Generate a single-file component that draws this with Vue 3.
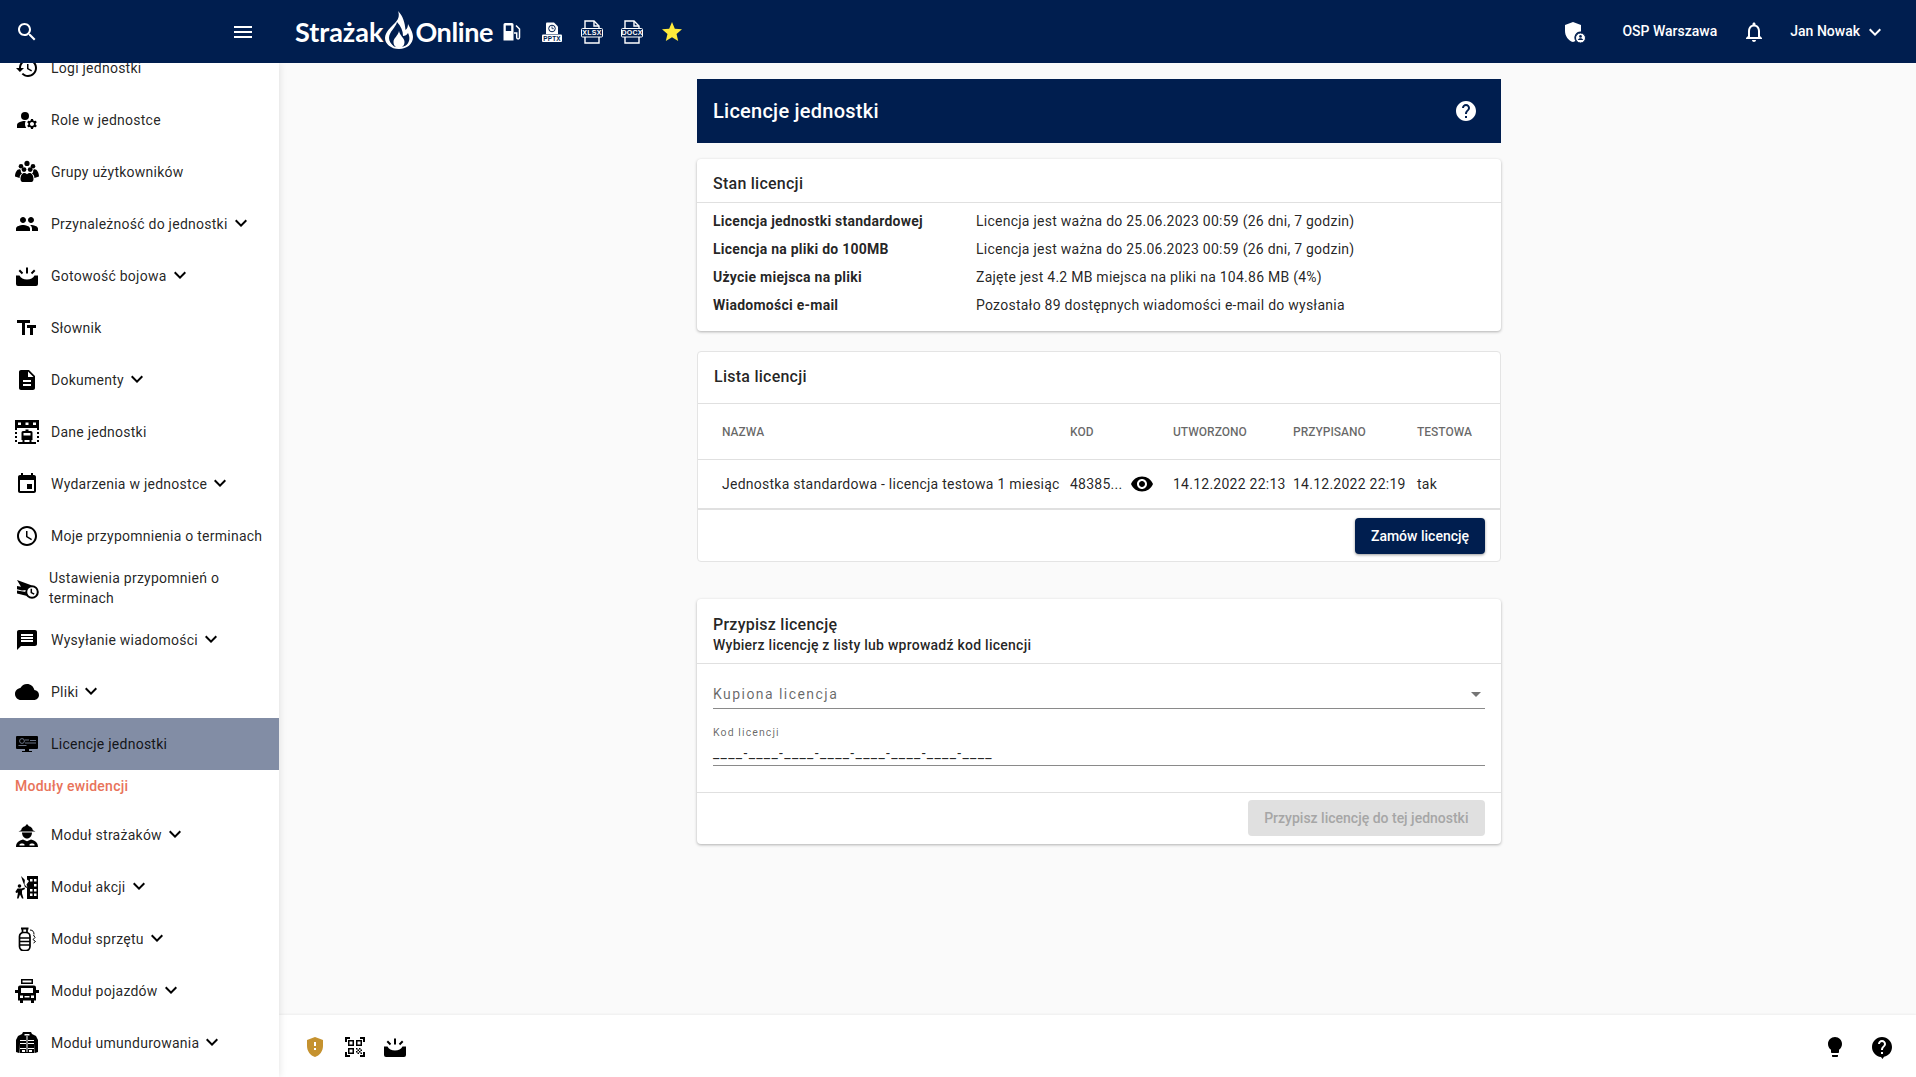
<script setup>
const p = (d, extra = '') => `<path d="${d}" ${extra}/>`;
const fileIcon = (label) => `
  <path d="M6 1h8l5 5v17H5V1z" fill="none" stroke="#fff" stroke-width="1.4"/>
  <path d="M14 1v5h5" fill="none" stroke="#fff" stroke-width="1.4"/>
  <rect x="1.5" y="8.5" width="21" height="8.5" rx="1" fill="#001e4f" stroke="#fff" stroke-width="1"/>
  <text x="12" y="15.300" text-anchor="middle" font-size="7" font-weight="700" font-family="Liberation Sans" fill="#fff">${label}</text>`;

// material paths + a few drawn by hand for the fire brigade stuff
const icons = {
  search: p('M15.5 14h-.79l-.28-.27C15.41 12.59 16 11.11 16 9.5 16 5.91 13.09 3 9.5 3S3 5.91 3 9.5 5.91 16 9.5 16c1.61 0 3.09-.59 4.23-1.57l.27.28v.79l5 4.99L20.49 19l-4.99-5zm-6 0C7.01 14 5 11.99 5 9.5S7.01 5 9.5 5 14 7.01 14 9.5 11.99 14 9.5 14z'),
  menu: p('M3 18h18v-2H3v2zm0-5h18v-2H3v2zm0-7v2h18V6H3z'),
  chevron: p('M16.59 8.59L12 13.17 7.41 8.59 6 10l6 6 6-6z'),
  bell: p('M12 22c1.1 0 2-.9 2-2h-4c0 1.1.9 2 2 2zm6-6v-5c0-3.07-1.63-5.64-4.5-6.32V4c0-.83-.67-1.5-1.5-1.5s-1.5.67-1.5 1.5v.68C7.64 5.36 6 7.92 6 11v5l-2 2v1h16v-1l-2-2zm-2 1H8v-6c0-2.48 1.51-4.5 4-4.5s4 2.02 4 4.5v6z'),
  star: p('M12 17.27L18.18 21l-1.64-7.03L22 9.24l-7.19-.61L12 2 9.19 8.63 2 9.24l5.46 4.73L5.82 21z'),
  help: p('M12 2C6.48 2 2 6.48 2 12s4.48 10 10 10 10-4.48 10-10S17.52 2 12 2zm1 17h-2v-2h2v2zm2.07-7.75l-.9.92C13.45 12.9 13 13.5 13 15h-2v-.5c0-1.1.45-2.1 1.17-2.83l1.24-1.26c.37-.36.59-.86.59-1.41 0-1.1-.9-2-2-2s-2 .9-2 2H8c0-2.21 1.79-4 4-4s4 1.79 4 4c0 .88-.36 1.68-.93 2.25z'),
  helpChat: p('M12 2C6.48 2 2 6.48 2 12c0 5.2 4 9.5 9 10l1.5 2 1.5-2.2c4.6-.8 8-5 8-9.8 0-5.52-4.48-10-10-10zm1 17h-2v-2h2v2zm2.07-7.75l-.9.92C13.45 12.9 13 13.5 13 15h-2v-.5c0-1.1.45-2.1 1.17-2.83l1.24-1.26c.37-.36.59-.86.59-1.41 0-1.1-.9-2-2-2s-2 .9-2 2H8c0-2.21 1.79-4 4-4s4 1.79 4 4c0 .88-.36 1.68-.93 2.25z'),
  eye: p('M12 4.5C7 4.5 2.73 7.61 1 12c1.73 4.39 6 7.5 11 7.5s9.27-3.11 11-7.5c-1.73-4.39-6-7.5-11-7.5zM12 17c-2.76 0-5-2.24-5-5s2.24-5 5-5 5 2.24 5 5-2.24 5-5 5zm0-8c-1.66 0-3 1.34-3 3s1.34 3 3 3 3-1.34 3-3-1.34-3-3-3z'),
  bulb: p('M9 21c0 .55.45 1 1 1h4c.55 0 1-.45 1-1v-1H9v1zm3-19C8.14 2 5 5.14 5 9c0 2.38 1.19 4.47 3 5.74V17c0 .55.45 1 1 1h6c.55 0 1-.45 1-1v-2.26c1.81-1.27 3-3.36 3-5.74 0-3.86-3.14-7-7-7z'),
  shieldWarn: p('M12 2L4 5v6.09c0 5.05 3.41 9.76 8 10.91 4.59-1.15 8-5.86 8-10.91V5l-8-3zm1 13h-2v-2h2v2zm0-4h-2V7h2v4z', 'fill="#c5922f"'),
  qr: p('M9.5 6.5v3h-3v-3h3M11 5H5v6h6V5zm-1.5 9.5v3h-3v-3h3M11 13H5v6h6v-6zm6.5-6.5v3h-3v-3h3M19 5h-6v6h6V5zm-6 8h1.5v1.5H13V13zm1.5 1.5H16V16h-1.5v-1.5zM16 13h1.5v1.5H16V13zm-3 3h1.5v1.5H13V16zm1.5 1.5H16V19h-1.5v-1.5zM16 16h1.5v1.5H16V16zm1.5-1.5H19V16h-1.5v-1.5zm0 3H19V19h-1.5v-1.5zM22 7h-2V4h-3V2h5v5zm0 15v-5h-2v3h-3v2h5zM2 22h5v-2H4v-3H2v5zM2 2v5h2V4h3V2H2z'),
  tray: p('M1 11.5h3.5c1.3 2.6 4 4 7.5 4s6.2-1.4 7.5-4H23V20a2 2 0 0 1-2 2H3a2 2 0 0 1-2-2z') + p('M11 3.5h2v6h-2zM3.6 7l1.4-1.4 3.2 3.2-1.4 1.4zM19 5.6L20.4 7l-3.2 3.2-1.4-1.4z'),
  shieldUser: p('M11 2L3 5v6c0 5.05 3.4 9.76 8 11 .9-.2 1.7-.6 2.5-1A6 6 0 0 1 19 11.6V5z') + '<circle cx="18.5" cy="18" r="5" stroke="#001e4f" stroke-width="1"/><circle cx="18.5" cy="16.4" r="1.3" fill="#001e4f"/><path d="M15.8 20c.5-1.2 1.5-1.7 2.7-1.7s2.2.5 2.7 1.7z" fill="#001e4f"/>',
  pump: p('M3.500 4.500A1.500 1.500 0 0 1 5 3h7a1.500 1.500 0 0 1 1.500 1.500V20.500h-10zM5.800 5.500v5.500h5.400V5.500z', 'fill-rule="evenodd"') + '<path d="M16 5.500l3.500 3.500v8.500a1.400 1.400 0 0 1-2.800 0V13H14" fill="none" stroke="#fff" stroke-width="1.500"/>',
  ppt: p('M7 2.500h7l4 4V14H6V3.500a1 1 0 0 1 1-1z') + '<circle cx="12" cy="8.500" r="3.300" fill="none" stroke="#001e4f" stroke-width="1"/><path d="M12 6.500v2.200h1.800" fill="none" stroke="#001e4f" stroke-width=".8"/><rect x="2" y="14.500" width="20" height="7.500" rx="1"/><text x="12" y="20.800" text-anchor="middle" font-size="6.400" font-weight="700" font-family="Liberation Sans" fill="#001e4f">PPTX</text>',
  xlsx: fileIcon('XLSX'),
  docx: fileIcon('DOCX'),
  history: p('M13 3c-4.97 0-9 4.03-9 9H1l3.89 3.89.07.14L9 12H6c0-3.87 3.13-7 7-7s7 3.13 7 7-3.13 7-7 7c-1.93 0-3.68-.79-4.94-2.06l-1.42 1.42C8.27 19.99 10.51 21 13 21c4.97 0 9-4.03 9-9s-4.03-9-9-9zm-1 5v5l4.28 2.54.72-1.21-3.5-2.08V8H12z'),
  roles: '<circle cx="10" cy="8" r="4"/>' + p('M10.67 13.02C10.45 13.01 10.23 13 10 13c-2.42 0-4.68.67-6.61 1.82-.88.52-1.39 1.5-1.39 2.53V20h9.26c-.79-1.13-1.26-2.51-1.26-4 0-1.07.25-2.07.67-2.98z') + p('M20.75 16c0-.22-.03-.42-.06-.63l1.14-1.01-1-1.73-1.45.49c-.32-.27-.68-.48-1.08-.63L18 11h-2l-.3 1.49c-.4.15-.76.36-1.08.63l-1.45-.49-1 1.73 1.14 1.01c-.03.21-.06.41-.06.63s.03.42.06.63l-1.14 1.01 1 1.73 1.45-.49c.32.27.68.48 1.08.63L16 21h2l.3-1.49c.4-.15.76-.36 1.08-.63l1.45.49 1-1.73-1.14-1.01c.03-.21.06-.41.06-.63zM17 18c-1.1 0-2-.9-2-2s.9-2 2-2 2 .9 2 2-.9 2-2 2z'),
  groups: '<circle cx="12" cy="3.4" r="2.6"/><circle cx="6" cy="6.2" r="2.3"/><circle cx="18" cy="6.2" r="2.3"/><circle cx="9" cy="9.6" r="2.4"/><circle cx="15.2" cy="9.6" r="2.4"/>' + p('M0 16.5c0-4 2-7.3 4.4-7.3.9 0 1.4.7 1.4 1.6 0 2 .8 2.4 1.4 2.8-1.8 1-2.6 2.5-2.6 4.4zM24 16.5c0-4-2-7.3-4.4-7.3-.9 0-1.4.7-1.4 1.6 0 2-.8 2.4-1.4 2.8 1.8 1 2.6 2.5 2.6 4.4z') + p('M5.5 19c0-3.4 1.8-6 3.8-6 1 0 1.9.5 2.7 1.2.8-.7 1.7-1.2 2.7-1.2 2 0 3.8 2.6 3.8 6 0 2-1 3-2 3h-9c-1 0-2-1-2-3z'),
  people: p('M16 11c1.66 0 2.99-1.34 2.99-3S17.66 5 16 5c-1.66 0-3 1.34-3 3s1.34 3 3 3zm-8 0c1.66 0 2.99-1.34 2.99-3S9.66 5 8 5C6.34 5 5 6.34 5 8s1.34 3 3 3zm0 2c-2.33 0-7 1.17-7 3.5V19h14v-2.5c0-2.33-4.67-3.5-7-3.5zm8 0c-.29 0-.62.02-.97.05 1.16.84 1.97 1.97 1.97 3.45V19h6v-2.5c0-2.33-4.67-3.5-7-3.5z'),
  dict: p('M2 4v3h5v12h3V7h5V4H2zm19 5h-9v3h3v7h3v-7h3V9z'),
  doc: p('M14 2H6c-1.1 0-1.99.9-1.99 2L4 20c0 1.1.89 2 1.99 2H18c1.1 0 2-.9 2-2V8l-6-6zm2 16H8v-2h8v2zm0-4H8v-2h8v2zm-3-5V3.5L18.5 9H13z'),
  station: p('M0 0h24v8H0zM3 2.6v2.4h3V2.6zM10.5 2.6v2.4h3V2.6zM18 2.6v2.4h3V2.6z', 'fill-rule="evenodd"') + p('M0 8h2v2H0zM0 12h2v2H0zM0 16h2v2H0zM0 20h2v2H0zM22 8h2v2h-2zM22 12h2v2h-2zM22 16h2v2h-2zM22 20h2v2h-2zM3 22h18v2H3z') + p('M10.5 9.5h3v1.5h2.5a1.5 1.5 0 0 1 1.5 1.5V20h-1v2h-2v-2h-5v2h-2v-2h-1v-7.5A1.5 1.5 0 0 1 8 11h2.5zM8.5 13v2.5h7V13z', 'fill-rule="evenodd"'),
  event: p('M17 12h-5v5h5v-5zM16 1v2H8V1H6v2H5c-1.11 0-1.99.9-1.99 2L3 19c0 1.1.89 2 2 2h14c1.1 0 2-.9 2-2V5c0-1.1-.9-2-2-2h-1V1h-2zm3 18H5V8h14v11z'),
  clock: p('M11.99 2C6.47 2 2 6.48 2 12s4.47 10 9.99 10C17.52 22 22 17.52 22 12S17.52 2 11.99 2zM12 20c-4.42 0-8-3.58-8-8s3.58-8 8-8 8 3.58 8 8-3.58 8-8 8zm.5-13H11v6l5.25 3.15.75-1.23-4.5-2.67z'),
  reminder: p('M2 4l15 5.6c-3 .8-5 2.5-5.8 4.4L7 14.6 2 13.2V10l4 .8zM2 14.5l8.8 1.4c0 1.6.5 3 1.3 4.1L2 17.5z') + '<circle cx="17" cy="16" r="5.8" fill="none" stroke="#000" stroke-width="2"/><path d="M16.3 12.8v3.8l2.9 1.6" fill="none" stroke="#000" stroke-width="1.5"/>',
  message: p('M20 2H4c-1.1 0-1.99.9-1.99 2L2 22l4-4h14c1.1 0 2-.9 2-2V4c0-1.1-.9-2-2-2zm-2 12H6v-2h12v2zm0-3H6V9h12v2zm0-3H6V6h12v2z'),
  cloud: p('M19.35 10.04C18.67 6.59 15.64 4 12 4 9.11 4 6.6 5.64 5.35 8.04 2.34 8.36 0 10.91 0 14c0 3.31 2.69 6 6 6h13c2.76 0 5-2.24 5-5 0-2.64-2.05-4.78-4.65-4.96z'),
  license: p('M2 4h20a1 1 0 0 1 1 1v11a1 1 0 0 1-1 1H2a1 1 0 0 1-1-1V5a1 1 0 0 1 1-1z') + p('M10 17h4v2h3v1H7v-1h3z') + '<circle cx="7" cy="9" r="2.4" fill="none" stroke="#828da5" stroke-width=".8"/><path d="M10 8h4M10 11h11M3.5 13.5h8M15 8.5h6" stroke="#828da5" stroke-width=".8"/>',
  firefighter: p('M12 1l2 2.2c2.2.4 3.6 2 3.8 4l2.7 1.3H3.5l2.7-1.3c.2-2 1.6-3.6 3.8-4z') + p('M7 9.5h10c0 3.4-2.2 6-5 6s-5-2.6-5-6z') + p('M1 24c0-4.2 2.8-6.4 7-7.4l4 1.6 4-1.6c4.2 1 7 3.2 7 7.4zM4.5 21.5v1h5v-1c-1-1.2-4-1.2-5 0zM14.5 21.5v1h5v-1c-1-1.2-4-1.2-5 0z', 'fill-rule="evenodd"'),
  action: p('M12 1h11v23H12zM15 4v2.5h2.5V4zM19 4v2.5h2.5V4zM19 9v2.5h2.5V9zM15 14v2.5h2.5V14zM19 14v2.5h2.5V14zM15 18.500v2.500h2.500v-2.500zM19 18.500v2.500h2.500v-2.500z', 'fill-rule="evenodd"') + p('M6 1l4 4 5 1-2 4 1 4-4-2-2-5z') + p('M10 3l4 3-2.500 3.500 1 3-3-3z', 'fill="#fff"') + '<circle cx="4.500" cy="11" r="1.800"/>' + p('M2.500 13.500h4l3-1 .5 1.500-3 1.500v3l1.500 5H7l-2-4-1.500 4H2l1-6-2 .5-.5-1.500z'),
  tank: '<g transform="translate(1.500 0)"><g fill="none" stroke="#000" stroke-width="1.700"><rect x="3" y="5.500" width="10.500" height="18" rx="4"/><path d="M3 11h10.500M3 14.500h10.500M3 18h10.500"/><path d="M6 5.500V2M10.500 5.500V2"/></g>' + p('M13.500 3c3 0 4 2 4 4.500M17 8l1.500 2.500-2 2 2.500 2-2 1.500', 'stroke="#000" stroke-width="1" fill="none"') + p('M4.500 .5h7.500V2.500H4.500z') + '</g>',
  truck: p('M6 0h12v1.500H6zM6 3.500h12V5H6zM6 0h1.500v5H6zM16.500 0H18v5h-1.500z') + p('M5 6.500h14a2 2 0 0 1 2 2V11h3v3h-3v7.500h-2V24h-3v-2.500H8V24H5v-2.500H3V14H0v-3h3V8.500a2 2 0 0 1 2-2zM6 9v5h12V9zM5 16.500V19h3v-2.500zM16 16.500V19h3v-2.500zM9.500 17v1.500h5V17z', 'fill-rule="evenodd"'),
  uniform: p('M8 1h8l1 2 4 2 2 4v12l-3 1V12.500l-.5 9.500h-15L4 12.500V22l-3-1V9l2-4 4-2zM9.500 3v1.500h5V3zM5 9v1h14V9zM5 12v1h14v-1zM5 17v1h14v-1zM11.500 5v16h1V5zM7 19v2h3v-2zM14 19v2h3v-2z', 'fill-rule="evenodd"')
};

const menuTop = [
  { label: 'Logi jednostki', icon: 'history' },
  { label: 'Role w jednostce', icon: 'roles' },
  { label: 'Grupy użytkowników', icon: 'groups' },
  { label: 'Przynależność do jednostki', icon: 'people', more: true },
  { label: 'Gotowość bojowa', icon: 'tray', more: true },
  { label: 'Słownik', icon: 'dict' },
  { label: 'Dokumenty', icon: 'doc', more: true },
  { label: 'Dane jednostki', icon: 'station' },
  { label: 'Wydarzenia w jednostce', icon: 'event', more: true },
  { label: 'Moje przypomnienia o terminach', icon: 'clock' },
  { label: 'Ustawienia przypomnień o terminach', icon: 'reminder', wrap: true },
  { label: 'Wysyłanie wiadomości', icon: 'message', more: true },
  { label: 'Pliki', icon: 'cloud', more: true },
  { label: 'Licencje jednostki', icon: 'license', active: true }
];

const menuModules = [
  { label: 'Moduł strażaków', icon: 'firefighter', more: true },
  { label: 'Moduł akcji', icon: 'action', more: true },
  { label: 'Moduł sprzętu', icon: 'tank', more: true },
  { label: 'Moduł pojazdów', icon: 'truck', more: true },
  { label: 'Moduł umundurowania', icon: 'uniform', more: true }
];

const licenseState = [
  { name: 'Licencja jednostki standardowej', value: 'Licencja jest ważna do 25.06.2023 00:59 (26 dni, 7 godzin)' },
  { name: 'Licencja na pliki do 100MB', value: 'Licencja jest ważna do 25.06.2023 00:59 (26 dni, 7 godzin)' },
  { name: 'Użycie miejsca na pliki', value: 'Zajęte jest 4.2 MB miejsca na pliki na 104.86 MB (4%)' },
  { name: 'Wiadomości e-mail', value: 'Pozostało 89 dostępnych wiadomości e-mail do wysłania' }
];

const topFiles = ['pump', 'ppt', 'xlsx', 'docx'];
</script>

<template>
  <div class="app">
    <header class="topbar">
      <div class="top-left">
        <svg class="ic white" viewBox="0 0 24 24" v-html="icons.search"></svg>
        <svg class="ic white" viewBox="0 0 24 24" v-html="icons.menu"></svg>
      </div>
      <div class="logo">
        <span>Strażak</span>
        <svg class="flame" viewBox="0 0 32 38">
          <path fill="#fff" fill-rule="evenodd" d="M15 0C17 5 15 9 12 12C8 16 2 21 2 27C2 33 8 38 16 38C24 38 30 33 30 26C30 21 27 17 25 13C25 16 24 18 22.500 19C22 12 20 5 15 0ZM14 11C13 16 6 21 6 27C6 30 8 33 11 35.500C15 36.500 21 36.500 24 33.500C27 30 27 26 25 22C24 24 22 25 20 25C20 20 18 15 14 11Z" />
          <path fill="#fff" d="M16 20C17 25 21.500 27 21.500 31C21.500 34.500 19 37 16 37C13 37 10.500 34.500 10.500 31C10.500 27 15 25 16 20Z" />
        </svg>
        <span class="logo-end">Online</span>
      </div>
      <div class="top-files">
        <svg v-for="f in topFiles" :key="f" class="ic white" viewBox="0 0 24 24" v-html="icons[f]"></svg>
        <svg class="ic star" viewBox="0 0 24 24" v-html="icons.star"></svg>
      </div>
      <div class="top-right">
        <svg class="ic white" viewBox="0 0 24 24" v-html="icons.shieldUser"></svg>
        <span class="unit">OSP Warszawa</span>
        <svg class="ic white" viewBox="0 0 24 24" v-html="icons.bell"></svg>
        <div class="user">
          <span>Jan Nowak</span>
          <svg class="ic white" viewBox="0 0 24 24" v-html="icons.chevron"></svg>
        </div>
      </div>
    </header>

    <div class="body">
      <aside class="sidebar">
        <ul class="menu">
          <li v-for="item in menuTop" :key="item.label" class="menu-item" :class="{ active: item.active }">
            <svg class="ic" viewBox="0 0 24 24" v-html="icons[item.icon]"></svg>
            <span class="menu-label" :class="{ wrap: item.wrap }">{{ item.label }}</span>
            <svg v-if="item.more" class="ic more" viewBox="0 0 24 24" v-html="icons.chevron"></svg>
          </li>
          <li class="menu-section">Moduły ewidencji</li>
          <li v-for="item in menuModules" :key="item.label" class="menu-item">
            <svg class="ic" viewBox="0 0 24 24" v-html="icons[item.icon]"></svg>
            <span class="menu-label">{{ item.label }}</span>
            <svg class="ic more" viewBox="0 0 24 24" v-html="icons.chevron"></svg>
          </li>
        </ul>
      </aside>

      <main class="main">
        <div class="content">
          <div class="page-head">
            <h1>Licencje jednostki</h1>
            <svg class="ic white" viewBox="0 0 24 24" v-html="icons.help"></svg>
          </div>

          <section class="card state-card">
            <h2 class="card-title">Stan licencji</h2>
            <dl class="state-list">
              <div v-for="row in licenseState" :key="row.name" class="state-row">
                <dt>{{ row.name }}</dt>
                <dd>{{ row.value }}</dd>
              </div>
            </dl>
          </section>

          <section class="card list-card">
            <h2 class="card-title">Lista licencji</h2>
            <div class="tr thead">
              <span>Nazwa</span>
              <span>Kod</span>
              <span>Utworzono</span>
              <span>Przypisano</span>
              <span>Testowa</span>
            </div>
            <div class="tr tbody">
              <span>Jednostka standardowa - licencja testowa 1 miesiąc</span>
              <span class="code">48385...<svg class="eye" viewBox="0 0 24 24" v-html="icons.eye"></svg></span>
              <span>14.12.2022 22:13</span>
              <span>14.12.2022 22:19</span>
              <span>tak</span>
            </div>
            <div class="list-actions">
              <button class="btn">Zamów licencję</button>
            </div>
          </section>

          <section class="card assign-card">
            <div class="assign-head">
              <h2>Przypisz licencję</h2>
              <p>Wybierz licencję z listy lub wprowadź kod licencji</p>
            </div>
            <div class="assign-form">
              <div class="field select">
                <span>Kupiona licencja</span>
                <i class="arrow"></i>
              </div>
              <div class="field text">
                <label>Kod licencji</label>
                <span>____-____-____-____-____-____-____-____</span>
              </div>
            </div>
            <div class="assign-actions">
              <button class="btn disabled">Przypisz licencję do tej jednostki</button>
            </div>
          </section>
        </div>

        <footer class="footer">
          <div class="foot-group">
            <svg class="ic" viewBox="0 0 24 24" v-html="icons.shieldWarn"></svg>
            <svg class="ic" viewBox="0 0 24 24" v-html="icons.qr"></svg>
            <svg class="ic" viewBox="0 0 24 24" v-html="icons.tray"></svg>
          </div>
          <div class="foot-group right">
            <svg class="ic" viewBox="0 0 24 24" v-html="icons.bulb"></svg>
            <svg class="ic" viewBox="0 0 24 24" v-html="icons.helpChat"></svg>
          </div>
        </footer>
      </main>
    </div>
  </div>
</template>

<style>
html, body {
  margin: 0;
  overflow: hidden;
}
</style>

<style scoped>
.app {
  display: flex;
  flex-direction: column;
  height: 1077px;
  font-family: Roboto, "Liberation Sans", sans-serif;
  font-size: 14px;
  letter-spacing: 0.25px;
  color: rgba(0, 0, 0, 0.87);
  background: #fafafa;
}

.ic {
  width: 24px;
  height: 24px;
  flex: none;
  fill: #000;
}
.ic.white { fill: #fff; }
.ic.star { fill: #ffeb3b; }

.topbar {
  display: flex;
  align-items: center;
  height: 63px;
  flex: none;
  background: #001e4f;
  color: #fff;
  position: relative;
  z-index: 2;
}
.top-left {
  display: flex;
  justify-content: space-between;
  width: 279px;
  padding: 0 24px 0 15px;
  box-sizing: border-box;
}
.logo {
  display: flex;
  align-items: center;
  width: 205px;
  margin-left: 16px;
  font-family: Lato, sans-serif;
  font-weight: 700;
  font-size: 27px;
  letter-spacing: 0;
}
.logo-end { letter-spacing: -0.4px; }
.flame {
  width: 32px;
  height: 38px;
  flex: none;
  margin-top: -4px;
}
.top-files {
  display: flex;
  gap: 16px;
}
.top-right {
  display: flex;
  align-items: center;
  margin-left: auto;
  padding-right: 29px;
  font-weight: 500;
  letter-spacing: 0;
}
.top-right span { margin-bottom: 2px; }
.unit { margin: 0 25px 2px 36px; }
.user {
  display: flex;
  align-items: center;
  gap: 3px;
  margin-left: 24px;
}

.body {
  display: flex;
  flex: 1;
  min-height: 0;
}

.sidebar {
  width: 279px;
  flex: none;
  overflow: hidden;
  background: #fff;
  box-shadow: 0 0 8px rgba(0, 0, 0, 0.12);
  position: relative;
  z-index: 1;
}
.menu {
  list-style: none;
  margin: -21px 0 0;
  padding: 0;
}
.menu-item {
  display: flex;
  align-items: center;
  height: 52px;
  padding-left: 15px;
}
.menu-item.active { background: #828da5; }
.menu-label {
  margin-left: 12px;
  white-space: nowrap;
}
.menu-label.wrap {
  white-space: normal;
  width: 190px;
  margin-left: 10px;
  line-height: 20px;
}
.more {
  margin: -3px 0 0 1px;
}
.menu-section {
  height: 39px;
  padding: 6px 0 0 15px;
  box-sizing: border-box;
  line-height: 20px;
  font-weight: 500;
  color: #e8735a;
}

.main {
  flex: 1;
  display: flex;
  flex-direction: column;
  min-width: 0;
}
.content {
  flex: 1;
  width: 804px;
  margin-left: 418px;
  padding-top: 16px;
}

.page-head {
  display: flex;
  align-items: center;
  justify-content: space-between;
  height: 64px;
  padding: 0 23px 0 16px;
  background: #001e4f;
  color: #fff;
}
.page-head h1 {
  margin: 0;
  font-size: 20px;
  font-weight: 500;
}

.card {
  background: #fff;
  border-radius: 4px;
  box-sizing: border-box;
}
.state-card {
  height: 172px;
  margin-top: 16px;
  box-shadow: 0 1px 3px rgba(0, 0, 0, 0.3);
}
.card-title {
  margin: 0;
  padding-left: 16px;
  box-sizing: border-box;
  font-size: 16px;
  font-weight: 500;
  height: 44px;
  line-height: 50px;
  border-bottom: 1px solid #e0e0e0;
}
.state-list {
  margin: 0;
  padding: 4px 16px 0;
}
.state-row {
  display: flex;
  height: 28px;
  align-items: center;
}
.state-row dt {
  width: 263px;
  flex: none;
  font-weight: 700;
}
.state-row dd { margin: 0; }

.list-card {
  height: 211px;
  margin-top: 20px;
  border: 1px solid #e4e4e4;
}
.list-card .card-title {
  height: 52px;
  line-height: 50px;
  padding-left: 16px;
}
.tr {
  display: grid;
  grid-template-columns: 348px 103px 120px 124px 1fr;
  align-items: center;
  padding-left: 24px;
  box-sizing: border-box;
  border-bottom: 1px solid #e0e0e0;
}
.thead {
  height: 56px;
  font-size: 12px;
  font-weight: 500;
  letter-spacing: 0;
  text-transform: uppercase;
  color: rgba(0, 0, 0, 0.6);
}
.tbody {
  height: 50px;
  border-bottom: 2px solid #e0e0e0;
  white-space: nowrap;
}
.code {
  display: flex;
  align-items: center;
}
.eye {
  width: 24px;
  height: 24px;
  margin-left: 8px;
  fill: #000;
}
.list-actions {
  display: flex;
  justify-content: flex-end;
  padding: 8px 15px 0 0;
}
.btn {
  height: 36px;
  padding: 0 16px;
  border: 0;
  border-radius: 4px;
  background: #001e4f;
  color: #fff;
  font-family: inherit;
  font-size: 14px;
  font-weight: 500;
  letter-spacing: 0;
  box-shadow: 0 1px 3px rgba(0, 0, 0, 0.4);
}
.btn.disabled {
  padding: 0 16.500px;
  background: #e0e0e0;
  color: #a6a6a6;
  box-shadow: none;
}

.assign-card {
  height: 245px;
  margin-top: 37px;
  box-shadow: 0 1px 3px rgba(0, 0, 0, 0.3);
}
.assign-head {
  height: 65px;
  box-sizing: border-box;
  padding: 16px 16px 0;
  border-bottom: 1px solid #e0e0e0;
}
.assign-head h2 {
  margin: 0;
  font-size: 16px;
  font-weight: 500;
  line-height: 20px;
}
.assign-head p {
  margin: 0;
  font-weight: 500;
  line-height: 20px;
}
.assign-form {
  height: 129px;
  box-sizing: border-box;
  padding: 0 16px;
  border-bottom: 1px solid #e0e0e0;
}
.field { border-bottom: 1px solid #8a8a8a; }
.field.select {
  display: flex;
  align-items: center;
  justify-content: space-between;
  height: 45px;
  box-sizing: border-box;
  padding-top: 16px;
  color: rgba(0, 0, 0, 0.6);
  letter-spacing: 1.450px;
}
.arrow {
  width: 0;
  height: 0;
  margin-right: 4px;
  border: 5px solid transparent;
  border-top-color: #757575;
  border-bottom: 0;
}
.field.text {
  display: flex;
  flex-direction: column;
  height: 46px;
  margin-top: 11px;
  box-sizing: border-box;
}
.field.text label {
  padding-top: 6px;
  font-size: 10.500px;
  line-height: 14px;
  letter-spacing: 1.100px;
  color: rgba(0, 0, 0, 0.6);
}
.field.text span {
  margin-top: 3px;
  line-height: 20px;
  letter-spacing: 1.300px;
}
.assign-actions {
  display: flex;
  justify-content: flex-end;
  padding: 7px 16px 0 0;
}

.footer {
  display: flex;
  justify-content: space-between;
  align-items: center;
  height: 62px;
  flex: none;
  box-sizing: border-box;
  padding: 2px 22px 0 24px;
  background: #fff;
  box-shadow: 0 -1px 2px rgba(0, 0, 0, 0.05);
}
.foot-group {
  display: flex;
  gap: 16px;
}
.foot-group.right { gap: 23px; }
</style>
